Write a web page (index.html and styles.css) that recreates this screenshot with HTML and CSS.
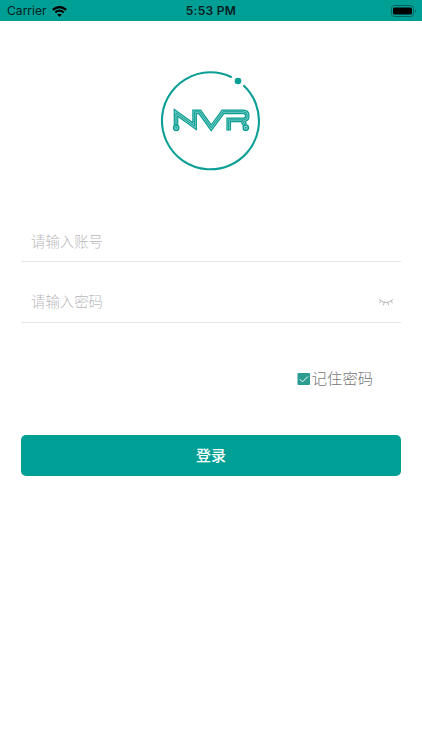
FILE: index.html
```html
<!DOCTYPE html>
<html lang="zh-CN">
<head>
<meta charset="utf-8">
<meta name="viewport" content="width=device-width, initial-scale=1">
<title>登录</title>
<link rel="stylesheet" href="styles.css">
</head>
<body>
<header class="status">
  <div class="carrier"><span>Carrier</span>
    <svg class="wifi" width="15" height="11" viewBox="0 0 15 11"><path d="M7.5 11 5.2 8.6Q7.5 6.7 9.8 8.6Z" fill="currentColor"/><path d="M3.3 6.5Q7.5 2.9 11.7 6.5M.8 3.9Q7.5-1.8 14.2 3.9" fill="none" stroke="currentColor" stroke-width="2.2"/></svg>
  </div>
  <div class="time">5:53 PM</div>
  <div class="power">
    <svg width="26" height="12" viewBox="0 0 26 12"><rect x=".5" y=".5" width="22" height="11" rx="3" fill="none" stroke="#00635d"/><rect x="2" y="2.5" width="19" height="7" rx="1.5" fill="#000"/><path d="M24 4Q25.6 6 24 8Z" fill="#00524d"/></svg>
  </div>
</header>
<main>
  <svg class="logo" width="112" height="112" viewBox="0 0 112 112">
    <defs>
      <path id="nv" d="M21 60.5V47.8L39.6 61.2V46.8H44.8L56.2 62.8 68 46.8H88.3Q92.3 46.8 92.3 50.8T88.3 54.9H73.7V65.5M87.2 54.9 90 60"/>
    </defs>
    <path d="M76.7 12.2A48.5 48.5 0 1 0 88.4 20.2" fill="none" stroke="#0a9f94" stroke-width="2.1"/>
    <circle cx="83" cy="16" r="3.3" fill="#0a9f94"/>
    <g fill="none">
      <use href="#nv" stroke="#0a9f94" stroke-width="4.7"/>
      <use href="#nv" stroke="#84cfc8" stroke-width="2.3"/>
      <use href="#nv" stroke="#0a9f94" stroke-width="1"/>
      <g fill="#a5dbd6" stroke="#0a9f94" stroke-width="1.5"><circle cx="21.2" cy="62.8" r="2.6"/><circle cx="90.8" cy="62.7" r="2.6"/></g>
    </g>
    <g fill="#0a9f94"><circle cx="21.2" cy="62.8" r="1"/><circle cx="90.8" cy="62.7" r="1"/></g>
  </svg>
  <div class="field">请输入账号</div>
  <div class="field password"><span>请输入密码</span>
    <svg width="16" height="10" viewBox="0 0 16 10" fill="none" stroke="#b3b3b3"><path d="M1 2.5Q8 8.6 15 2.5M3.5 4.3 1.2 6M6.2 5.6 5.4 8.3M9.8 5.6 10.6 8.3M12.5 4.3 14.8 6"/></svg>
  </div>
  <div class="remember">
    <svg width="13" height="13" viewBox="0 0 13 13"><rect x=".5" y="0" width="12.5" height="12" rx="1" fill="#2c9c91"/><path d="M2.8 6.2 5.5 8.9 10.9 3.5" fill="none" stroke="#fff" stroke-width="1"/></svg>
    <span>记住密码</span>
  </div>
  <button class="login" type="button">登录</button>
</main>
</body>
</html>
```
FILE: styles.css
```css
* { box-sizing: border-box; }
body {
  margin: 0;
  height: 750px;
  background: #fff;
  font-family: Inter, "Noto Sans CJK SC", sans-serif;
}
.status {
  display: grid;
  grid-template-columns: 1fr auto 1fr;
  align-items: center;
  height: 21px;
  padding: 1px 5px 0 7px;
  background: #009f95;
  color: #06201e;
  font-size: 12.1px;
  line-height: 20px;
}
.carrier { display: flex; align-items: center; gap: 5px; }
.wifi { color: #000; }
.time { margin-right: 2px; font-weight: 600; font-size: 12px; letter-spacing: .3px; }
.power { display: flex; justify-content: flex-end; }
main { display: flex; flex-direction: column; padding: 44px 21px 0; }
.logo { align-self: center; margin-bottom: 43px; }
.field {
  height: 42px;
  padding: 0 7px 0 10px;
  border-bottom: 1px solid #e6e6e6;
  color: #b9b9bc;
  font-size: 14.4px;
  font-weight: 300;
  line-height: 43px;
}
.password {
  display: flex;
  align-items: center;
  justify-content: space-between;
  margin-top: 19px;
}
.remember {
  display: flex;
  align-items: center;
  align-self: flex-end;
  gap: 2px;
  height: 24px;
  margin: 44px 28px 0 0;
  color: #777;
  font-size: 15.3px;
  font-weight: 300;
  line-height: 26px;
}
.login {
  height: 41px;
  margin-top: 44px;
  padding: 0;
  border: 0;
  border-radius: 5px;
  background: #009f95;
  color: #fff;
  font: 500 15px/42px Inter, "Noto Sans CJK SC", sans-serif;
}
```
